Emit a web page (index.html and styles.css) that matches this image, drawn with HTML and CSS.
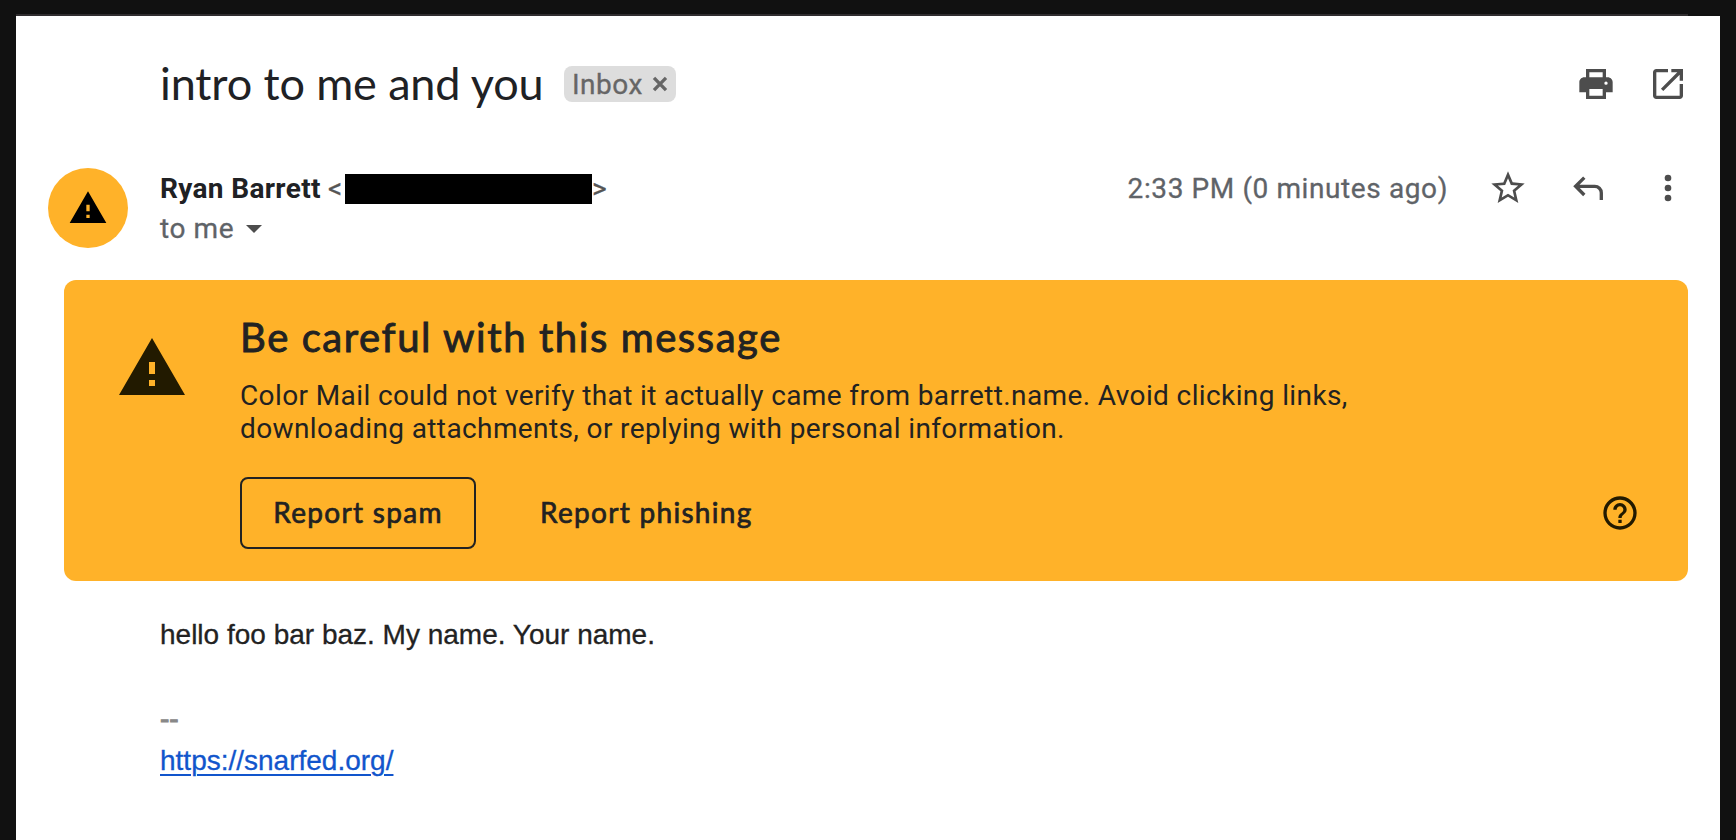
FILE: index.html
```html
<!DOCTYPE html>
<html lang="en">
<head>
<meta charset="utf-8">
<title>intro to me and you</title>
<link rel="stylesheet" href="styles.css">
</head>
<body>
<div class="edge"></div>
<main class="window">
  <header class="subject">
    <h1 class="subject-title">intro to me and you</h1>
    <span class="chip"><span class="chip-label">Inbox</span><svg class="chip-close" viewBox="0 0 16 16"><path d="M2 1.8l12 12.4M14 1.8L2 14.2"/></svg></span>
    <div class="subject-actions">
      <svg class="icon" viewBox="0 0 24 24"><path fill-rule="evenodd" d="M19 8h-1V3H6v5H5c-1.66 0-3 1.34-3 3v6h4v4h12v-4h4v-6c0-1.66-1.34-3-3-3zM8 5h8v3H8V5zm0 10h8v4H8v-4zm10-4.5a1 1 0 1 1 0 2 1 1 0 0 1 0-2z"/></svg>
      <svg class="icon" viewBox="0 0 24 24"><path d="M5 3h7v2H5v14h14v-7h2v7c0 1.1-.9 2-2 2H5c-1.1 0-2-.9-2-2V5c0-1.1.9-2 2-2zM14 3h7v7h-2V6.41L9.17 16.24l-1.41-1.41L17.59 5H14V3z"/></svg>
    </div>
  </header>

  <section class="sender">
    <div class="avatar">
      <svg class="avatar-icon" viewBox="0 0 24 24"><path d="M1 21h22L12 2 1 21zm12-3h-2v-2h2v2zm0-4h-2v-4h2v4z"/></svg>
    </div>
    <div class="sender-info">
      <div class="sender-line"><span class="sender-name">Ryan Barrett</span><span class="bracket">&lt;</span><span class="redacted"></span><span class="bracket">&gt;</span></div>
      <div class="recipient-line"><span class="recipient">to me</span><svg class="caret" viewBox="0 0 16 8"><path d="M0 0h16L8 8z"/></svg></div>
    </div>
    <div class="sender-actions">
      <span class="time">2:33 PM (0 minutes ago)</span>
      <svg class="icon" viewBox="0 0 24 24"><path d="M22 9.24l-7.19-.62L12 2 9.19 8.63 2 9.24l5.46 4.73L5.82 21 12 17.27 18.18 21l-1.63-7.03L22 9.24zM12 15.4l-3.76 2.27 1-4.28-3.32-2.88 4.38-.38L12 6.1l1.71 4.04 4.38.38-3.32 2.88 1 4.28L12 15.4z"/></svg>
      <svg class="icon reply" viewBox="0 0 40 40"><path d="M16.3 9.6L7.6 18.3l8.7 8.7M7.6 18.3h19.2a6.5 6.5 0 0 1 6.5 6.5V32"/></svg>
      <svg class="icon" viewBox="0 0 24 24"><circle cx="12" cy="6" r="2"/><circle cx="12" cy="12" r="2"/><circle cx="12" cy="18" r="2"/></svg>
    </div>
  </section>

  <section class="banner">
    <svg class="banner-icon" viewBox="0 0 24 24"><path d="M1 21h22L12 2 1 21zm12-3h-2v-2h2v2zm0-4h-2v-4h2v4z"/></svg>
    <div class="banner-content">
      <h2 class="banner-title">Be careful with this message</h2>
      <p class="banner-text">Color Mail could not verify that it actually came from barrett.name. Avoid clicking links,<br>downloading attachments, or replying with personal information.</p>
      <div class="banner-actions">
        <button class="button outlined">Report spam</button>
        <button class="button">Report phishing</button>
        <svg class="help" viewBox="0 0 24 24"><path d="M11 18h2v-2h-2v2zm1-16C6.48 2 2 6.48 2 12s4.48 10 10 10 10-4.48 10-10S17.52 2 12 2zm0 18c-4.41 0-8-3.59-8-8s3.59-8 8-8 8 3.59 8 8-3.59 8-8 8zm0-14c-2.21 0-4 1.79-4 4h2c0-1.1.9-2 2-2s2 .9 2 2c0 2-3 1.75-3 5h2c0-2.25 3-2.5 3-5 0-2.21-1.79-4-4-4z"/></svg>
      </div>
    </div>
  </section>

  <article class="message">
    <p class="message-text">hello foo bar baz. My name. Your name.</p>
    <p class="signature-mark">--</p>
    <a class="link" href="https://snarfed.org/">https://snarfed.org/</a>
  </article>
</main>
</body>
</html>
```
FILE: styles.css
```css
* { box-sizing: border-box; margin: 0; padding: 0; }

body {
  height: 840px;
  padding: 14px 16px 0;
  overflow: hidden;
  background: #111;
  color: #202124;
  font-family: Roboto, "Liberation Sans", sans-serif;
  font-size: 28px;
}

.edge { height: 2px; margin-right: 32px; background: #302d2f; }

.window { height: 824px; padding: 48px 32px 0; background: #fff; }

.icon { width: 40px; height: 40px; flex: none; fill: #4d4d4d; }
.reply { fill: none; stroke: #4d4d4d; stroke-width: 3.33; }

.subject { display: flex; align-items: center; height: 40px; padding-left: 112px; }
.subject-title {
  width: 404px;
  padding-bottom: 2px;
  font-family: Lato, Roboto, sans-serif;
  font-size: 45px;
  font-weight: 400;
  letter-spacing: -0.12px;
  line-height: 56px;
  white-space: nowrap;
}
.chip {
  display: flex;
  align-items: center;
  width: 112px;
  height: 36px;
  padding: 0 8px;
  border-radius: 8px;
  background: #ddd;
  color: #666;
}
.chip-label { line-height: 36px; padding-top: 1px; letter-spacing: 0.5px; -webkit-text-stroke: 0.3px; }
.chip-close { width: 16px; height: 16px; margin-left: auto; fill: none; stroke: #666; stroke-width: 3.3; }
.subject-actions { display: flex; gap: 32px; margin-left: auto; }

.sender { display: flex; height: 80px; margin-top: 64px; }
.avatar {
  display: flex;
  align-items: center;
  justify-content: center;
  width: 80px;
  height: 80px;
  border-radius: 50%;
  background: #ffb229;
}
.avatar-icon { width: 40px; height: 40px; }
.sender-info { margin-left: 32px; }
.sender-line { display: flex; align-items: center; height: 40px; }
.sender-name { width: 168px; font-weight: 700; letter-spacing: 0.35px; white-space: nowrap; }
.bracket { width: 17px; color: #555; -webkit-text-stroke: 0.3px; }
.redacted { width: 247px; height: 30px; margin-top: 1px; background: #000; }
.recipient-line { display: flex; align-items: center; height: 40px; color: #5f6368; }
.recipient { width: 86px; letter-spacing: 0.6px; -webkit-text-stroke: 0.3px; }
.caret { width: 16px; height: 8px; margin-top: 1px; fill: #4d4d4d; }
.sender-actions { display: flex; align-items: center; height: 40px; margin-left: auto; gap: 40px; }
.time { color: #5f6368; letter-spacing: 0.6px; white-space: nowrap; -webkit-text-stroke: 0.3px; }

.banner {
  display: flex;
  width: 1624px;
  height: 301px;
  margin: 32px 0 0 16px;
  padding: 32px 48px 32px 52px;
  border-radius: 12px;
  background: #ffb229;
  color: #222;
}
.banner-icon { width: 72px; height: 72px; margin: 20px 52px 0 0; fill: #221a00; }
.banner-content { flex: 1; }
.banner-title {
  padding-top: 1px;
  font-family: Lato, Roboto, sans-serif;
  font-size: 40px;
  font-weight: 400;
  letter-spacing: 1.58px;
  line-height: 48px;
  white-space: nowrap;
  -webkit-text-stroke: 0.9px;
}
.banner-text { margin-top: 18px; letter-spacing: 0.39px; line-height: 33px; }
.banner-actions { display: flex; align-items: center; height: 72px; margin-top: 32px; }
.button {
  height: 72px;
  padding: 0 32px 2px;
  border: 0;
  border-radius: 8px;
  background: transparent;
  color: #222;
  font-family: Lato, Roboto, sans-serif;
  font-size: 28px;
  font-weight: 400;
  letter-spacing: 1.3px;
  white-space: nowrap;
  -webkit-text-stroke: 0.7px;
}
.outlined { width: 236px; margin-right: 32px; padding: 0 0 2px; border: 2px solid #222; }
.help { width: 40px; height: 40px; margin-left: auto; fill: #221a00; }

.message { padding: 34px 0 0 112px; font-family: "Liberation Sans", Arial, sans-serif; color: #222; -webkit-text-stroke: 0.3px; }
.message-text, .signature-mark, .link { line-height: 40px; }
.signature-mark { margin-top: 44px; color: #888; -webkit-text-stroke: 1px; }
.link { display: inline-block; margin-top: 2px; color: #15c; text-decoration: underline; text-decoration-thickness: 2px; text-underline-offset: 4px; }
```
